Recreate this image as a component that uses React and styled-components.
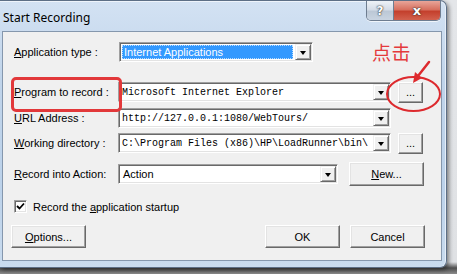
import React from 'react';
import styled, { createGlobalStyle } from 'styled-components';

const GlobalStyle = createGlobalStyle`
	html, body {
		margin: 0;
		padding: 0;
		background: #6a6a6a;
	}
	* {
		box-sizing: border-box;
	}
`;

const Screen = styled.div`
	width: 457px;
	height: 274px;
	overflow: hidden;
	background: linear-gradient(to bottom, #e4e6e9 0px, #dfe1e4 262px, #4e4e4e 268px, #8c8c8c 274px);
	font-family: "Liberation Sans", Arial, sans-serif;
`;

const Window = styled.div`
	position: relative;
	display: flex;
	flex-direction: column;
	width: 447px;
	height: 268px;
	border: 1px solid #5d6f86;
	border-left: none;
	border-radius: 0 7px 7px 0;
	background: linear-gradient(to bottom, #d3e2f3 0%, #c0d4ea 30%, #bcd2ea 70%, #c9dbee 100%);
	box-shadow: 2px 2px 4px rgba(0, 0, 0, 0.45), inset 0 1px 0 #eef4fb, inset -1px 0 0 #e6eef8;
`;

const TitleBar = styled.div`
	display: flex;
	align-items: flex-start;
	height: 30px;
	padding: 0 5px 0 3px;
`;

const Title = styled.span`
	margin-top: 8px;
	font-family: "Noto Sans", "Open Sans", sans-serif;
	font-size: 12px;
	line-height: 17px;
	color: #000;
`;

const CaptionButtons = styled.div`
	display: flex;
	margin-left: auto;
	height: 20px;
	border: 1px solid #6e7d90;
	border-top: none;
	border-radius: 0 0 5px 5px;
	overflow: hidden;
	box-shadow: 0 1px 0 rgba(255, 255, 255, 0.7);
`;

const CaptionButton = styled.div`
	display: flex;
	align-items: center;
	justify-content: center;
	width: ${({ $width }) => $width}px;
	height: 100%;
	font-family: "DejaVu Sans", sans-serif;
	font-weight: bold;
	font-size: ${({ $close }) => ($close ? 13 : 12)}px;
	color: #fff;
	text-shadow: 0 0 2px #2b2b2b, 0 0 1px #2b2b2b;
	background: ${({ $close }) =>
		$close
			? 'linear-gradient(to bottom, #e8a599 0%, #d7705f 45%, #c4402d 55%, #d2614e 100%)'
			: 'linear-gradient(to bottom, #eef2f7 0%, #d5dde8 45%, #bcc8d6 55%, #c9d4e1 100%)'};
	border-left: ${({ $close }) => ($close ? '1px solid #6e7d90' : 'none')};
`;

const Client = styled.div`
	position: relative;
	display: flex;
	flex-direction: column;
	height: 230px;
	margin: 0 4px 0 2px;
	border: 1px solid #8597ad;
	background: #f0f0f0;
	padding: 0 16px 0 11px;
	font-size: 11px;
	color: #000;
`;

const Row = styled.div`
	display: flex;
	align-items: center;
	height: ${({ $height }) => $height || 20}px;
	margin-top: ${({ $gap }) => $gap}px;
`;

const Label = styled.div`
	position: relative;
	display: flex;
	align-items: center;
	width: 104px;
	height: 100%;
	white-space: nowrap;
	${({ $marked }) => $marked && `
		&::after {
			content: "";
			position: absolute;
			left: -3px;
			top: -5px;
			width: 105px;
			height: 29px;
			border: 3px solid #e2383a;
			border-radius: 5px;
		}
	`};
`;

const Key = styled.span`
	text-decoration: underline;
`;

const Combo = styled.div`
	display: flex;
	width: ${({ $width }) => $width}px;
	height: 20px;
	padding: 1px;
	margin-left: ${({ $offset }) => $offset || 0}px;
	background: #fff;
	border: 1px solid;
	border-color: #a0a0a0 #fff #fff #a0a0a0;
	box-shadow: inset 1px 1px 0 #696969, inset -1px -1px 0 #e3e3e3;
`;

const ComboText = styled.div`
	display: flex;
	align-items: center;
	flex: 1;
	min-width: 0;
	padding-left: ${({ $mono }) => ($mono ? 2 : 3)}px;
	overflow: hidden;
	white-space: nowrap;
	font-family: ${({ $mono }) => ($mono ? '"Liberation Mono", "Courier New", monospace' : '"Liberation Sans", Arial, sans-serif')};
	font-size: ${({ $mono }) => ($mono ? 10 : 11)}px;
`;

const Selected = styled.div`
	display: flex;
	align-items: center;
	flex: 1;
	margin: 1px 2px 1px 1px;
	padding-left: 2px;
	background: #3399ff;
	color: #fff;
	outline: 1px dotted #b8dcff;
	outline-offset: -1px;
	white-space: nowrap;
`;

const DropButton = styled.div`
	display: flex;
	align-items: center;
	justify-content: center;
	width: 16px;
	height: 100%;
	background: #f0f0f0;
	border: 1px solid;
	border-color: #f0f0f0 #696969 #696969 #f0f0f0;
	box-shadow: inset 1px 1px 0 #fff, inset -1px -1px 0 #a0a0a0;
`;

const Arrow = styled.span`
	width: 0;
	height: 0;
	border-left: 3.5px solid transparent;
	border-right: 3.5px solid transparent;
	border-top: 4px solid #000;
	margin-top: 1px;
`;

const Button = styled.div`
	position: relative;
	display: flex;
	align-items: center;
	justify-content: center;
	width: ${({ $width }) => $width}px;
	height: ${({ $height }) => $height || 23}px;
	margin-left: ${({ $gap }) => ($gap === 'auto' ? 'auto' : `${$gap || 0}px`)};
	background: #f0f0f0;
	border: 1px solid;
	border-color: #fff #696969 #696969 #fff;
	box-shadow: inset -1px -1px 0 #a0a0a0, inset 1px 1px 0 #e3e3e3;
	font-size: 11px;
	white-space: nowrap;
	${({ $circled }) => $circled && `
		&::after {
			content: "";
			position: absolute;
			left: -13px;
			top: -7px;
			width: 51px;
			height: 32px;
			border: 2.5px solid #dd2a2e;
			border-radius: 50%;
		}
	`};
`;

const Hint = styled.span`
	margin-left: 59px;
	font-family: "Noto Sans CJK SC", "Noto Sans", sans-serif;
	font-size: 19px;
	line-height: 20px;
	color: #e43a3c;
	letter-spacing: 0.5px;
`;

const Pointer = styled.svg`
	position: absolute;
	left: 401px;
	top: 26px;
	overflow: visible;
`;

const CheckRow = styled(Row)`
	gap: 6px;
`;

const CheckBox = styled.div`
	display: flex;
	align-items: center;
	justify-content: center;
	width: 13px;
	height: 13px;
	background: #fff;
	border: 1px solid;
	border-color: #a0a0a0 #fff #fff #a0a0a0;
	box-shadow: inset 1px 1px 0 #696969, inset -1px -1px 0 #e3e3e3;
`;

const ButtonRow = styled(Row)`
	margin-left: -3px;
`;

const fields = [
	{ label: 'rogram to record :', key: 'P', value: 'Microsoft Internet Explorer', gap: 20, browse: true, marked: true },
	{ label: 'RL Address :', key: 'U', value: 'http://127.0.0.1:1080/WebTours/', gap: 6 },
	{ label: 'orking directory :', key: 'W', value: 'C:\\Program Files (x86)\\HP\\LoadRunner\\bin\\', gap: 5, browse: true },
];

const App = () => (
	<Screen>
		<GlobalStyle />
		<Window>
			<TitleBar>
				<Title>Start Recording</Title>
				<CaptionButtons>
					<CaptionButton $width={26}>?</CaptionButton>
					<CaptionButton $width={47} $close>x</CaptionButton>
				</CaptionButtons>
			</TitleBar>
			<Client>
				<Row $gap={10}>
					<Label><span><Key>A</Key>pplication type :</span></Label>
					<Combo $width={194} $offset={1}>
						<Selected>Internet Applications</Selected>
						<DropButton><Arrow /></DropButton>
					</Combo>
					<Hint>点击</Hint>
				</Row>
				{fields.map((field) => (
					<Row key={field.key} $gap={field.gap}>
						<Label $marked={field.marked}><span><Key>{field.key}</Key>{field.label}</span></Label>
						<Combo $width={273}>
							<ComboText $mono>{field.value}</ComboText>
							<DropButton><Arrow /></DropButton>
						</Combo>
						{field.browse && <Button $width={25} $height={21} $gap={7} $circled={field.marked}>...</Button>}
					</Row>
				))}
				<Row $gap={9} $height={24}>
					<Label><span><Key>R</Key>ecord into Action:</span></Label>
					<Combo $width={220}>
						<ComboText>Action</ComboText>
						<DropButton><Arrow /></DropButton>
					</Combo>
					<Button $width={75} $height={24} $gap={11}><span><Key>N</Key>ew...</span></Button>
				</Row>
				<CheckRow $gap={14} $height={13}>
					<CheckBox>
						<svg width="9" height="9" viewBox="0 0 9 9">
							<path d="M1 4 L3.5 6.5 L8 1.5" fill="none" stroke="#000" strokeWidth="1.8" />
						</svg>
					</CheckBox>
					<span>Record the <Key>a</Key>pplication startup</span>
				</CheckRow>
				<ButtonRow $gap={12} $height={23}>
					<Button $width={75}><span><Key>O</Key>ptions...</span></Button>
					<Button $width={75} $gap="auto">OK</Button>
					<Button $width={75} $gap={10}>Cancel</Button>
				</ButtonRow>
				<Pointer width="30" height="32" viewBox="0 0 30 32">
					<line x1="25" y1="4" x2="14" y2="18" stroke="#dd2a2e" strokeWidth="2.5" strokeLinecap="round" />
					<polygon points="9,25 18,20 11,14" fill="#dd2a2e" />
				</Pointer>
			</Client>
		</Window>
	</Screen>
);

export default App;
